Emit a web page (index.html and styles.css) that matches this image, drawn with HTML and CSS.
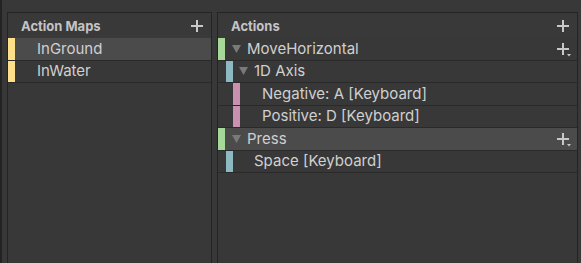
FILE: index.html
```html
<!DOCTYPE html>
<html>
<head>
<meta charset="utf-8">
<link rel="stylesheet" href="styles.css">
</head>
<body>
<div class="window">
  <div class="edge"></div>
  <section class="panel panel-maps">
    <header class="panel-head">
      <span class="panel-title">Action Maps</span>
      <svg class="plus" width="12" height="12" viewBox="0 0 12 12"><path d="M5 0h2v12H5zM0 5h12v2H0z"/></svg>
    </header>
    <div class="row selected">
      <span class="bar bar-yellow"></span>
      <span class="label map-label">InGround</span>
    </div>
    <div class="row">
      <span class="bar bar-yellow"></span>
      <span class="label map-label">InWater</span>
    </div>
  </section>
  <section class="panel panel-actions">
    <header class="panel-head">
      <span class="panel-title">Actions</span>
      <svg class="plus" width="12" height="12" viewBox="0 0 12 12"><path d="M5 0h2v12H5zM0 5h12v2H0z"/></svg>
    </header>
    <div class="row">
      <span class="bar bar-green lvl0"></span>
      <svg class="fold" width="9" height="8" viewBox="0 0 9 8"><polygon points="0,0 9,0 4.5,8"/></svg>
      <span class="label">MoveHorizontal</span>
      <svg class="plus-drop" width="15" height="14" viewBox="0 0 15 14"><path d="M5 0h2v12H5zM0 5h12v2H0z"/><polygon points="10,11 14,11 12,13.5"/></svg>
    </div>
    <div class="row">
      <span class="bar bar-blue lvl1"></span>
      <svg class="fold fold1" width="9" height="8" viewBox="0 0 9 8"><polygon points="0,0 9,0 4.5,8"/></svg>
      <span class="label">1D Axis</span>
    </div>
    <div class="row">
      <span class="bar bar-pink lvl2"></span>
      <span class="label leaf2">Negative: A [Keyboard]</span>
    </div>
    <div class="row">
      <span class="bar bar-pink lvl2"></span>
      <span class="label leaf2">Positive: D [Keyboard]</span>
    </div>
    <div class="row selected">
      <span class="bar bar-green lvl0"></span>
      <svg class="fold" width="9" height="8" viewBox="0 0 9 8"><polygon points="0,0 9,0 4.5,8"/></svg>
      <span class="label">Press</span>
      <svg class="plus-drop" width="15" height="14" viewBox="0 0 15 14"><path d="M5 0h2v12H5zM0 5h12v2H0z"/><polygon points="10,11 14,11 12,13.5"/></svg>
    </div>
    <div class="row">
      <span class="bar bar-blue lvl1"></span>
      <span class="label leaf1">Space [Keyboard]</span>
    </div>
  </section>
</div>
</body>
</html>
```
FILE: styles.css
```css
* { box-sizing: border-box; }
html, body {
  margin: 0;
  padding: 0;
  background: #383838;
  width: 581px;
  height: 263px;
  overflow: hidden;
  font-family: Inter, "Noto Sans", sans-serif;
}
.window {
  display: flex;
  height: 263px;
  padding-top: 12px;
}
.edge {
  width: 2px;
  margin-top: -12px;
  background: #232323;
  margin-right: 5px;
}
.panel {
  display: flex;
  flex-direction: column;
  border: 1px solid #242424;
  border-bottom: none;
  background: #383838;
}
.panel-maps { width: 205px; }
.panel-actions { width: 361px; margin-left: 5px; }
.panel-head {
  height: 25px;
  display: flex;
  align-items: center;
  justify-content: space-between;
  padding: 0 8px 0 13px;
  background: #393939;
}
.panel-title {
  font-size: 13px;
  font-weight: 700;
  color: #c4c4c4;
  padding-top: 1px;
}
.plus { fill: #c8c8c8; margin-top: 0; }
.row {
  height: 22.5px;
  display: flex;
  align-items: stretch;
  border-bottom: 1px solid #2a2a2a;
  flex: none;
}
.row.selected { background: #4b4b4b; }
.bar { width: 7px; flex: none; }
.bar-yellow { background: #fee08b; }
.bar-green { background: #a6d899; }
.bar-blue { background: #8dbac2; }
.bar-pink { background: #c990b0; }
.lvl0 { margin-left: 0; }
.lvl1 { margin-left: 8px; }
.lvl2 { margin-left: 15px; }
.row > .bar + * { }
.label {
  font-size: 15px;
  color: #d0d0d0;
  align-self: center;
  line-height: 18px;
  white-space: nowrap;
}
.map-label { margin-left: 22px; }
.fold {
  fill: #7a7a7a;
  align-self: center;
  margin-left: 7px;
  margin-right: 6px;
  margin-top: 0px;
}
.fold1 { margin-left: 6px; }
.leaf2 { margin-left: 22px; }
.leaf1 { margin-left: 21px; }
.plus-drop {
  fill: #c8c8c8;
  margin-left: auto;
  margin-right: 5px;
  align-self: center;
  margin-top: 3px;
}
.panel-maps .row { background-clip: border-box; }
.panel-maps .row:not(.selected) { background: transparent; }
```
